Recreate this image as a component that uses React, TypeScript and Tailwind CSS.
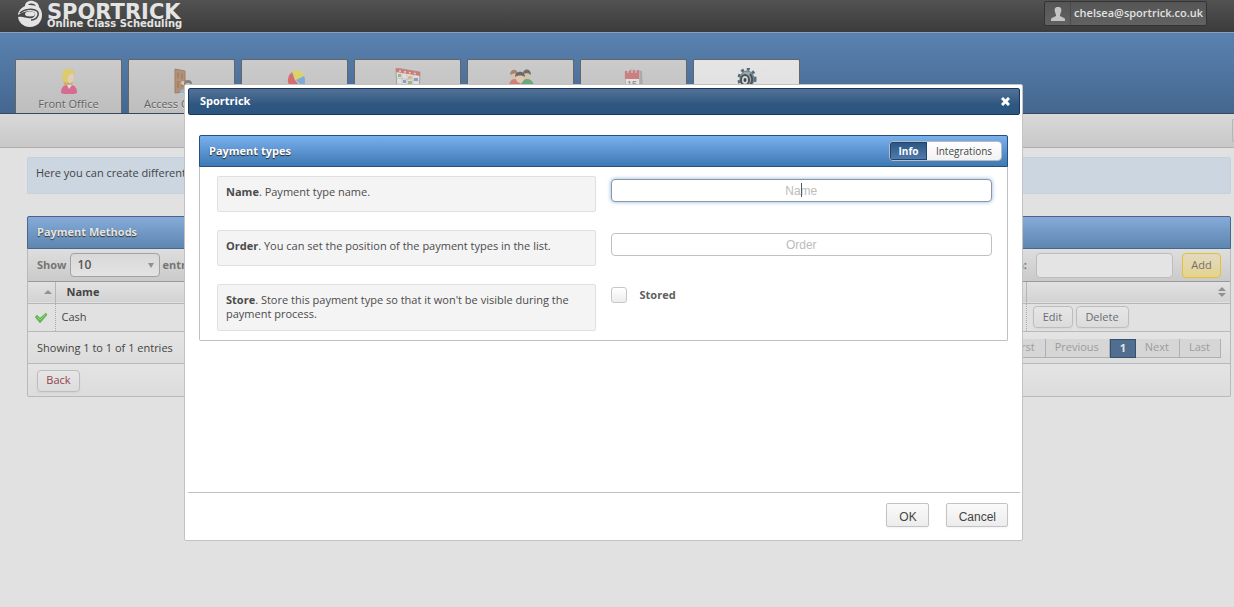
import React from "react";

const btnCls =
  "rounded border border-[#bdbdbd] bg-gradient-to-b from-[#e6e6e6] to-[#dcdcdc] shadow-xs";
const dialogBtnCls =
  "h-6 rounded-xs border border-[#c3c3c3] bg-gradient-to-b from-[#fafafa] to-[#ececec] pl-3 pr-[11px] pt-1 font-['Liberation_Sans',sans-serif] text-[12px] leading-4 text-[#444] shadow-xs";
const inputCls =
  "block h-[23px] w-full rounded border bg-white text-center font-['Liberation_Sans',sans-serif] text-[12px] text-[#444] placeholder:text-[#bcbcbc] outline-none";
const pageCls = "h-[19px] border-b border-r border-[#b0b0b0] bg-[#d6d6d6] pl-[9px] pr-2.5 text-[#9c9c9c]";

const WomanIcon = () => (
  <svg viewBox="0 0 24 26" className="h-[26px] w-6" aria-hidden="true">
    <path d="M4 25c0-5 2-8 6-8h4c4 0 6 3 6 8-4 2-12 2-16 0z" fill="#e2346f" />
    <path d="M10 17l2 4 3-4z" fill="#eee" />
    <path d="M7 16C5 8 4 1 12 1c5 0 6 4 5 8l-2 8H8z" fill="#d3a520" />
    <ellipse cx="13" cy="9" rx="4" ry="6" fill="#f2d3b6" />
    <path d="M6 13C4 4 8 0 13 1c4 1 4 3 4 5-3-1-5 0-6 3l-1 6z" fill="#ecd030" />
  </svg>
);

const DoorIcon = () => (
  <svg viewBox="0 0 24 26" className="h-[26px] w-6" aria-hidden="true">
    <path d="M5 1l10 2v21L5 25z" fill="#a96f42" stroke="#81502d" />
    <path d="M7 4l2 1v5H7zM11 5l2 1v5h-2zM7 13h2v7H7zM11 13h2v6h-2z" fill="#875832" />
    <circle cx="13" cy="15" r="2" fill="#eecb9c" />
    <circle cx="18" cy="16" r="4" fill="#555" />
    <circle cx="18" cy="18" r="3" fill="#efc6a6" />
    <path d="M10 25c0-5 4-4 8-4s5 2 5 4z" fill="#6cb5d7" />
  </svg>
);

const PieIcon = () => (
  <svg viewBox="0 0 24 26" className="h-[26px] w-6" aria-hidden="true">
    <path d="M12 12L9 4a9 10 0 1 0 10 17z" fill="#e03535" />
    <path d="M12 12L10 3c5-2 9 0 11 5z" fill="#ecdc25" />
    <path d="M13 12l8-4c2 4 1 9-1 11z" fill="#4f9be0" />
  </svg>
);

const PlannerIcon = () => (
  <svg viewBox="0 0 26 26" className="h-[26px] w-[26px]" aria-hidden="true">
    <path d="M1 0l24 4-1 22H2z" fill="#f2f2f2" stroke="#8c8c8c" />
    <path d="M1 0l24 4v4L1 4z" fill="#d04b42" />
    <path d="M4 3l19 3" stroke="#f6d6d1" strokeWidth="1.5" strokeDasharray="2 3" />
    <path d="M2 10l22 3M2 16l22 2M7 5v20M12 6v19M18 7v18" stroke="#aaa" strokeWidth=".6" />
    <path d="M3 6h3v3H3zM13 13h4v4h-4zM19 17h4v4h-4z" fill="#7aae66" />
    <path d="M8 12h3v3H8zM19 10h4v3h-4zM8 18h3v3H8z" fill="#6b82b6" />
    <path d="M13 8h4v3h-4zM3 16h3v4H3z" fill="#e5b365" />
  </svg>
);

const PeopleIcon = () => (
  <svg viewBox="0 0 26 26" className="h-[26px] w-[26px]" aria-hidden="true">
    <ellipse cx="6" cy="7" rx="3" ry="4" fill="#e9bd98" />
    <path d="M2 7c0-7 8-7 8 0-2-2-5-2-8 0z" fill="#8f5a3a" />
    <ellipse cx="19" cy="7" rx="3" ry="4" fill="#e9bd98" />
    <path d="M15 6c0-6 8-6 8 1-2-2-5-2-8-1z" fill="#373431" />
    <path d="M1 19c0-5 2-8 6-8s6 3 6 8z" fill="#d55345" />
    <path d="M13 20c0-6 2-9 6-9s7 3 7 9z" fill="#2f9548" />
    <path d="M3 25c0-7 3-9 8-9s8 2 8 9z" fill="#d8403a" />
    <ellipse cx="12" cy="10" rx="4" ry="5" fill="#f0c8a4" />
    <path d="M7 9c0-7 10-7 10 0-3-2-7-2-10 0z" fill="#302d2a" />
  </svg>
);

const CalendarIcon = () => (
  <svg viewBox="0 0 24 26" className="h-[26px] w-6" aria-hidden="true">
    <path d="M8 1l12 2 1 22-11 1z" fill="#989898" />
    <path d="M3 4l14-1 1 22H4z" fill="#f5f5f5" stroke="#aaa" />
    <path d="M3 3l14-1v9H3z" fill="#d14e56" />
    <path d="M6 1v4M10 1v4M14 1v4" stroke="#ddd" />
    <text x="5" y="19" fontSize="9" fill="#555" fontFamily="Liberation Sans">15</text>
  </svg>
);

const GearIcon = () => (
  <svg viewBox="0 0 24 26" className="h-[26px] w-6" aria-hidden="true">
    <ellipse cx="12" cy="11" rx="8" ry="10" fill="none" stroke="#46606e" strokeWidth="3" strokeDasharray="3 3" />
    <ellipse cx="12" cy="11" rx="7" ry="8" fill="#8fa2aa" stroke="#5f727c" />
    <ellipse cx="10" cy="12" rx="4" ry="5" fill="#d5d8d5" stroke="#3d464a" strokeWidth="2" />
    <ellipse cx="10" cy="12" rx="1.5" ry="2" fill="#333" />
    <path d="M15 6c3 3 3 8 0 11" stroke="#35444d" strokeWidth="2" fill="none" />
  </svg>
);

const BallLogo = () => (
  <svg viewBox="0 0 25 27" className="h-[27px] w-[25px]" aria-hidden="true">
    <path d="M7 6C7 3 10 0 15 1c4 1 6 3 6 6 2 2 3 5 3 8 0 7-5 12-12 12S0 22 0 16C0 11 3 8 7 6z" fill="#e4e4e4" />
    <path d="M10 5c2-2 6-2 8 1-2-1-5-1-8-1z" fill="#484848" />
    <path d="M2 13c4-4 13-5 17-2 3 3 0 9-6 9" fill="none" stroke="#484848" strokeWidth="1.5" />
    <path d="M0 15c5-4 14-5 17-2 1 4-3 6-7 5-3 0-5-2-10-1z" fill="#484848" />
    <ellipse cx="12" cy="14" rx="5" ry="2.5" fill="#e4e4e4" />
  </svg>
);

const tabs = [
  { label: "Front Office", icon: <WomanIcon /> },
  { label: "Access Control", icon: <DoorIcon /> },
  { label: "Reports", icon: <PieIcon /> },
  { label: "Planner", icon: <PlannerIcon /> },
  { label: "Customers", icon: <PeopleIcon /> },
  { label: "Calendar", icon: <CalendarIcon /> },
  { label: "Settings", icon: <GearIcon />, active: true },
];

const Header = () => (
  <header className="flex h-[33px] items-start justify-between border-b border-[#87a0bd] bg-gradient-to-b from-[#525252] to-[#3c3c3c] pl-[18px] pr-[27px]">
    <a href="#" className="flex gap-1 font-['DejaVu_Sans',sans-serif] font-bold text-[#e4e4e4]">
      <BallLogo />
      <span className="flex flex-col pt-1">
        <span className="text-[21px] leading-4">SPORTRICK</span>
        <span className="text-[10px] leading-[7px]">Online Class Scheduling</span>
      </span>
    </a>
    <button className="mt-px flex h-[25px] items-center rounded-xs border border-[#333] bg-gradient-to-b from-[#555] to-[#626262] text-[11px] font-semibold text-[#e2e2e2]">
      <span className="flex h-full w-[26px] items-center justify-center border-r border-[#4a4a4a]">
        <svg viewBox="0 0 14 14" className="h-3.5 w-3.5" fill="#c4c4c4" aria-hidden="true">
          <path d="M7 0c3 0 4 2 3 5L9 8v1l4 2c1 0 1 1 1 3H0c0-2 0-3 1-3l4-2V8L4 5C3 2 4 0 7 0z" />
        </svg>
      </span>
      <span className="px-[3px]">chelsea@sportrick.co.uk</span>
    </button>
  </header>
);

const NavTabs = () => (
  <nav className="flex h-[81px] items-end gap-1.5 border-b border-[#34485f] bg-gradient-to-b from-[#5a82b0] to-[#44678f] pl-[15px]">
    {tabs.map((tab) => (
      <a
        key={tab.label}
        href="#"
        className={`flex h-[54px] w-[107px] shrink-0 flex-col items-center rounded-t-xs border border-b-0 border-[#666] pt-2 text-[11px] leading-4 text-[#606060] [text-shadow:0_1px_0_#ddd] ${
          tab.active ? "bg-gradient-to-b from-[#e5e5e5] to-[#dedede]" : "bg-gradient-to-b from-[#cbcbcb] to-[#bebebe]"
        }`}
      >
        <span className={tab.active ? "opacity-90" : "opacity-60"}>{tab.icon}</span>
        <span className="pt-0.5">{tab.label}</span>
      </a>
    ))}
  </nav>
);

const PaymentMethods = () => (
  <section className="mt-[22px] rounded-xs border border-t-0 border-[#b9b9b9]">
    <h2 className="-mx-px flex h-[33px] items-center rounded-t-xs border border-[#4a6587] bg-gradient-to-b from-[#86abd9] to-[#5d86b0] px-[9px] text-[11px] font-bold text-[#e4e4e4] [text-shadow:0_1px_1px_#333]">
      Payment Methods
    </h2>
    <div className="flex h-[33px] items-center justify-between border-b border-[#999] bg-gradient-to-b from-[#dedede] to-[#cacaca] px-[9px] text-[11px] font-bold text-[#757575]">
      <div className="flex items-center gap-[3px]">
        <label htmlFor="length">Show</label>
        <span className="relative">
          <select
            id="length"
            className="h-6 w-[90px] appearance-none rounded border border-[#a2a2a2] bg-gradient-to-b from-[#d8d8d8] to-[#e3e3e3] px-[7px] text-[12px] font-semibold text-[#555]"
          >
            <option>10</option>
          </select>
          <span className="pointer-events-none absolute right-1.5 top-2.5 border-x-3 border-t-5 border-x-transparent border-t-[#919191]" />
        </span>
        <span>entries</span>
      </div>
      <div className="flex items-center">
        <label htmlFor="search">Search:</label>
        <input id="search" className="ml-[9px] h-[25px] w-[137px] rounded border border-[#bdbdbd] bg-[#e4e4e4]" />
        <button className="ml-[9px] h-[25px] w-[39px] rounded border border-[#e3c137] bg-gradient-to-b from-[#e3dac0] to-[#e5d38d] font-normal text-[#717171]">
          Add
        </button>
      </div>
    </div>
    <table className="w-full table-fixed border-collapse text-left text-[11px] leading-4 text-[#444]">
      <colgroup>
        <col className="w-[27px]" />
        <col />
        <col className="w-[204px]" />
      </colgroup>
      <thead>
        <tr className="h-[21px] border-b border-[#b5b5b5] bg-gradient-to-b from-[#e1e1e1] to-[#d3d3d3]">
          <th className="border-r border-[#b5b5b5] p-0" aria-label="Stored">
            <span className="ml-4 block h-0 w-0 border-x-4 border-b-4 border-x-transparent border-b-[#919191]" />
          </th>
          <th className="border-r border-[#b5b5b5] px-[11px] py-0 font-bold">Name</th>
          <th className="p-0" aria-label="Actions">
            <span className="mr-1 flex flex-col items-end gap-0.5">
              <span className="border-x-4 border-b-4 border-x-transparent border-b-[#919191]" />
              <span className="border-x-4 border-t-4 border-x-transparent border-t-[#919191]" />
            </span>
          </th>
        </tr>
      </thead>
      <tbody>
        <tr className="h-7 border-b border-[#b9b9b9]">
          <td className="border-r border-dotted border-r-[#aaa] p-0 pl-1.5">
            <svg viewBox="0 0 14 11" className="h-[11px] w-3.5" aria-hidden="true">
              <path d="M1 5l2-2 3 3 6-5 1 2-7 8z" fill="#5fba4c" stroke="#6aa860" strokeWidth=".5" />
              <path d="M3 5l3 3 5-5" fill="none" stroke="#8fd07d" />
            </svg>
          </td>
          <td className="border-r border-dotted border-r-[#aaa] px-1.5 py-0">Cash</td>
          <td className="p-0 pl-1.5">
            <span className="flex gap-[3px] text-[#6a6e76]">
              <button className={`h-[22px] w-10 ${btnCls}`}>Edit</button>
              <button className={`h-[22px] w-[53px] ${btnCls}`}>Delete</button>
            </span>
          </td>
        </tr>
      </tbody>
    </table>
    <div className="flex h-8 items-center justify-between border-b border-[#b9b9b9] bg-gradient-to-b from-[#e4e4e4] to-[#dcdcdc] px-[9px] pt-0.5 text-[11px] text-[#444]">
      <span>Showing 1 to 1 of 1 entries</span>
      <div className="flex">
        <button className={pageCls}>First</button>
        <button className={pageCls}>Previous</button>
        <button className="h-[19px] w-[26px] border border-[#37506d] bg-[#506e90] font-bold text-[#e4e4e4]">1</button>
        <button className={pageCls}>Next</button>
        <button className={pageCls}>Last</button>
      </div>
    </div>
    <div className="flex h-8 items-center bg-gradient-to-b from-[#e4e4e4] to-[#dcdcdc] px-[9px] pt-0.5 text-[11px] text-[#94424f]">
      <button className={`h-[22px] w-[43px] ${btnCls}`}>Back</button>
    </div>
  </section>
);

interface FieldProps {
  title: string;
  help: string;
  children: React.ReactNode;
}

const Field: React.FC<FieldProps> = ({ title, help, children }) => (
  <div className="grid grid-cols-[379fr_382fr] items-start gap-[15px]">
    <p className="min-h-9 rounded-xs border border-[#e0e0e0] bg-[#f4f4f4] px-2 pb-[9px] pt-2 text-[11px] leading-[14px] text-[#4b4b4b]">
      <strong className="font-bold">{title}</strong>. {help}
    </p>
    <div className="pt-[3px]">{children}</div>
  </div>
);

const PaymentTypeDialog = () => (
  <div className="fixed inset-0 flex items-start justify-center pr-[27px] pt-[84px]">
    <div
      role="dialog"
      aria-label="Sportrick"
      className="w-full max-w-[839px] rounded-xs border border-[#c3c3c3] bg-white py-[3px] pl-[3px] pr-0.5"
    >
      <div className="flex h-[27px] items-center justify-between rounded-xs border border-[#1c3858] bg-gradient-to-b from-[#537298] via-[#2e5680] via-65% to-[#2b5580] pl-[11px] pr-[9px] text-[11px] font-bold text-white">
        <span>Sportrick</span>
        <button aria-label="Close">
          <svg viewBox="0 0 9 9" className="h-[9px] w-[9px]" stroke="#fff" strokeWidth="3" aria-hidden="true">
            <path d="M1 1l7 7M8 1L1 8" />
          </svg>
        </button>
      </div>
      <div className="min-h-[377px] pl-[11px] pr-3 pt-5">
        <section className="rounded-xs border border-t-0 border-[#c0c0c0]">
          <div className="-mx-px flex h-8 items-center justify-between rounded-t-xs border border-[#285078] bg-gradient-to-b from-[#79b0ee] to-[#3e7ab5] pl-[9px] pr-[5px] text-[11px]">
            <h2 className="font-bold text-white [text-shadow:0_1px_1px_#222]">Payment types</h2>
            <div className="flex h-5 overflow-hidden rounded border border-[#bbb] text-[10px]">
              <button className="w-[37px] border border-[#1e446e] bg-gradient-to-b from-[#2c5683] to-[#517baa] font-bold text-white">
                Info
              </button>
              <button className="w-[74px] bg-gradient-to-b from-white to-[#f2f2f2] text-[#444]">Integrations</button>
            </div>
          </div>
          <form className="flex flex-col gap-[18px] pb-[9px] pl-[17px] pr-[15px] pt-[9px]">
            <Field title="Name" help="Payment type name.">
              <div className="relative">
                <input
                  aria-label="Name"
                  placeholder="Name"
                  className={`${inputCls} border-[#8c97a6] shadow-[0_0_4px_#8db4e0]`}
                />
                <span className="absolute left-1/2 top-1 h-3.5 w-px bg-[#555b66]" />
              </div>
            </Field>
            <Field title="Order" help="You can set the position of the payment types in the list.">
              <input aria-label="Order" placeholder="Order" className={`${inputCls} border-[#c0c0c0]`} />
            </Field>
            <Field
              title="Store"
              help="Store this payment type so that it won't be visible during the payment process."
            >
              <label className="flex items-center gap-[13px] text-[11px] font-bold leading-4 text-[#5e5e5e]">
                <input
                  type="checkbox"
                  className="h-4 w-4 appearance-none rounded-[3px] border border-[#c6c6c6] bg-gradient-to-b from-white to-[#ededed]"
                />
                Stored
              </label>
            </Field>
          </form>
        </section>
      </div>
      <div className="flex h-[45px] justify-end gap-[17px] border-t border-[#c0c0c0] pr-3 pt-2.5">
        <button className={dialogBtnCls}>OK</button>
        <button className={dialogBtnCls}>Cancel</button>
      </div>
    </div>
  </div>
);

export default function App() {
  return (
    <div className="min-h-screen bg-[#e1e1e1] font-['Open_Sans','Noto_Sans',sans-serif]">
      <Header />
      <NavTabs />
      <div className="flex h-[34px] items-center justify-end border-b border-[#afafaf] bg-gradient-to-b from-[#d9d9d9] to-[#c8c8c8]">
        <span className="h-[23px] w-0.5 rounded-l border border-r-0 border-[#b5b5b5]" />
      </div>
      <main className="pb-8 pl-[27px] pr-[3px] pt-[9px]">
        <p className="h-[37px] rounded-xs border border-[#c5d2dc] bg-[#cbd6e1] px-2 py-[7px] text-[11px] leading-4 text-[#444]">
          Here you can create different payment methods.
        </p>
        <PaymentMethods />
      </main>
      <PaymentTypeDialog />
    </div>
  );
}
